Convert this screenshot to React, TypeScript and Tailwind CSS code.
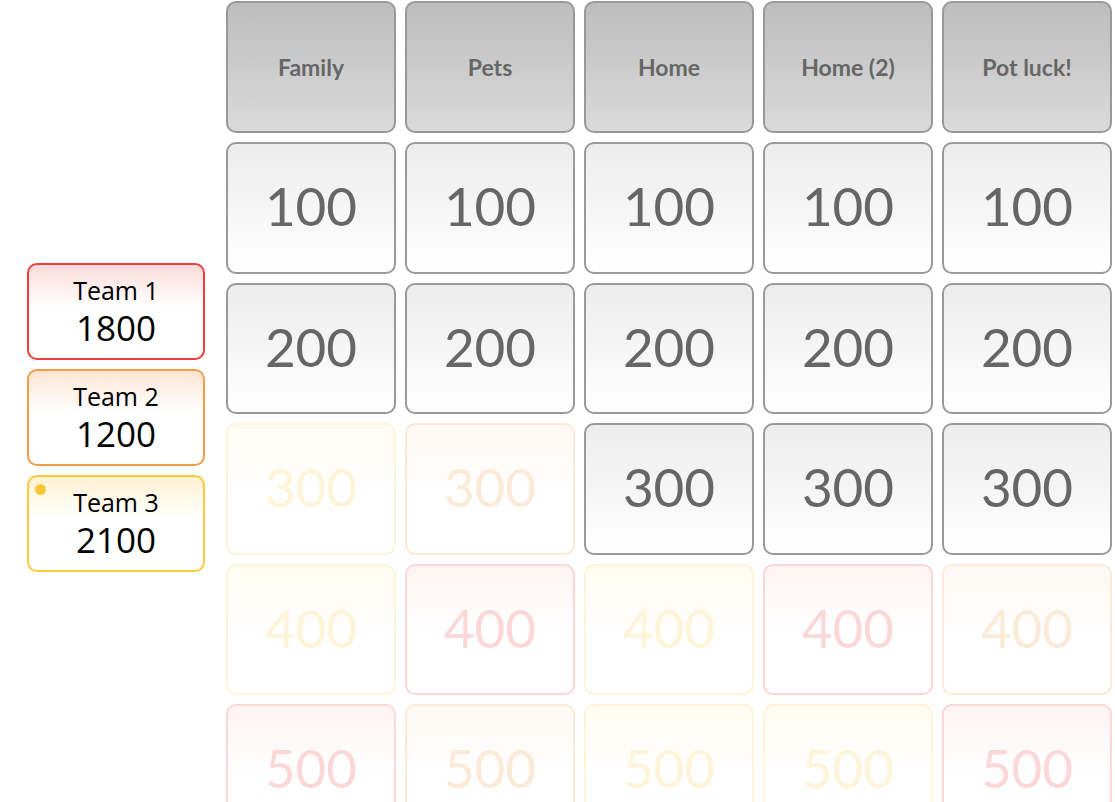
import React from "react";

type Team = "r" | "o" | "y" | null;

const cats = ["Family", "Pets", "Home", "Home (2)", "Pot luck!"];
const values = [100, 200, 300, 400, 500];
const board: Team[][] = [
  [null, null, null, null, null],
  [null, null, null, null, null],
  ["y", "o", null, null, null],
  ["y", "r", "y", "r", "o"],
  ["r", "o", "y", "y", "r"],
];

const font = { fontFamily: "Lato, 'Open Sans', sans-serif" };
const teamFont = { fontFamily: "'Open Sans', Lato, sans-serif" };

function Cell({ value, team }: { value: number; team: Team }) {
  if (team === null) {
    return (
      <div className="h-[131.5px] rounded-[10px] border-2 border-[#999] bg-gradient-to-b from-[#ececec] to-white flex items-center justify-center text-[53px] text-[#666] pb-[4px]">
        {value}
      </div>
    );
  }
  const cls =
    team === "r"
      ? "border-[#ee3b3b] text-[#ee3b3b] from-[#fcc8c8]"
      : team === "o"
      ? "border-[#f39c45] text-[#f39c45] from-[#fde0c4]"
      : "border-[#fbcb3e] text-[#fbcb3e] from-[#fff0c0]";
  return (
    <div
      className={`h-[131.5px] rounded-[10px] border-2 bg-gradient-to-b to-white to-50% opacity-20 flex items-center justify-center text-[53px] pb-[4px] ${cls}`}
    >
      {value}
    </div>
  );
}

function TeamCard({
  name,
  score,
  cls,
  dot,
}: {
  name: string;
  score: number;
  cls: string;
  dot?: boolean;
}) {
  return (
    <div
      className={`relative h-[97px] rounded-[10px] border-2 bg-gradient-to-b to-white to-45% flex flex-col items-center justify-center text-black ${cls}`}
      style={teamFont}
    >
      {dot && (
        <div className="absolute top-[7px] left-[6px] w-[11px] h-[11px] rounded-full bg-[#fbc63a]" />
      )}
      <div className="text-[25px] leading-[34px]">{name}</div>
      <div className="text-[35px] leading-[46px] -mt-[2px]">{score}</div>
    </div>
  );
}

export default function App() {
  return (
    <div className="flex items-center bg-white min-h-screen" style={font}>
      <div className="w-[226px] pl-[27px] pr-[21px] flex flex-col gap-[9px]">
        <TeamCard name="Team 1" score={1800} cls="border-[#ee3b3b] from-[#fddcdc]" />
        <TeamCard name="Team 2" score={1200} cls="border-[#f39c45] from-[#fde6d4]" />
        <TeamCard name="Team 3" score={2100} cls="border-[#fbcb3e] from-[#fff2d2]" dot />
      </div>
      <div className="pt-px grid grid-cols-[repeat(5,170px)] gap-x-[9px] gap-y-[9px]">
        {cats.map((c) => (
          <div
            key={c}
            className="h-[132px] rounded-[10px] border-2 border-[#999] bg-gradient-to-b from-[#bdbdbd] to-[#dadada] flex items-center justify-center text-[23px] font-bold text-[#666]"
          >
            {c}
          </div>
        ))}
        {values.map((v, ri) =>
          board[ri].map((t, ci) => <Cell key={`${ri}-${ci}`} value={v} team={t} />)
        )}
      </div>
    </div>
  );
}
